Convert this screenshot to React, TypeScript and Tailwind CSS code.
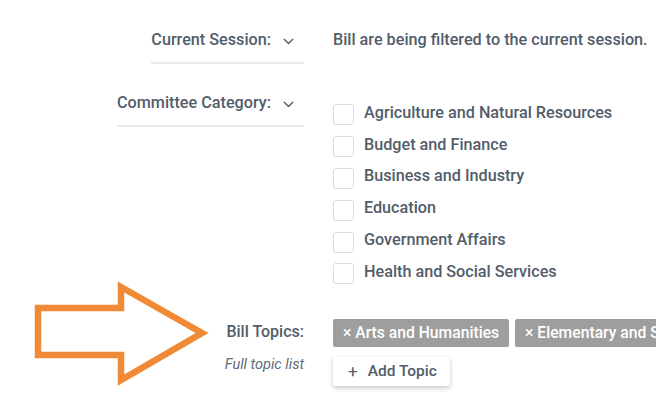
import React from "react";

const categories = [
  "Agriculture and Natural Resources",
  "Budget and Finance",
  "Business and Industry",
  "Education",
  "Government Affairs",
  "Health and Social Services",
];

function Chevron() {
  return (
    <svg width="11" height="7" viewBox="0 0 11 7" className="ml-[12px] mt-[10px]" fill="none">
      <path d="M1.2 1.2 L5.5 5.5 L9.8 1.2" stroke="#5b6470" strokeWidth="1.5" strokeLinecap="round" strokeLinejoin="round" />
    </svg>
  );
}

export default function App() {
  return (
    <div className="relative w-[656px] h-[405px] overflow-hidden bg-white font-['Roboto','Liberation_Sans',sans-serif] text-[#535d6a]">
      <svg className="absolute left-0 top-0 pointer-events-none" width="656" height="405" viewBox="0 0 656 405">
        <polygon
          points="38,308 121,308 121,287 202,333 121,380 121,355 38,355"
          fill="none"
          stroke="#f08a36"
          strokeWidth="6.5"
          strokeLinejoin="miter"
        />
      </svg>

      <div className="pt-[28px]">
        {/* Current Session */}
        <div className="flex">
          <div className="w-[304px] flex justify-end shrink-0">
            <div className="flex items-start border-b-2 border-[#ebebeb] pb-[10px] pr-[10px]">
              <span className="text-[16.2px] leading-[24px] font-medium">Current Session:</span>
              <Chevron />
            </div>
          </div>
          <div className="pl-[29px] text-[16.2px] leading-[24px] font-medium whitespace-nowrap">
            Bill are being filtered to the current session.
          </div>
        </div>

        {/* Committee Category */}
        <div className="flex mt-[27px]">
          <div className="w-[304px] flex justify-end shrink-0 self-start">
            <div className="flex items-start border-b-2 border-[#ebebeb] pb-[10px] pr-[10px]">
              <span className="text-[16.2px] leading-[24px] font-medium">Committee Category:</span>
              <Chevron />
            </div>
          </div>
          <div className="pl-[29px] pt-[6px] flex flex-col">
            {categories.map((c) => (
              <label key={c} className="flex items-center h-[31.8px] whitespace-nowrap">
                <span className="w-[21px] h-[21px] mt-[4px] rounded-[3px] border border-[#dcdcdc] bg-white shrink-0" />
                <span className="ml-[10px] text-[16.2px] leading-[24px] font-medium">{c}</span>
              </label>
            ))}
          </div>
        </div>

        {/* Bill Topics */}
        <div className="flex mt-[31px]">
          <div className="w-[304px] flex flex-col items-end shrink-0 pt-[1px]">
            <span className="text-[16px] leading-[24px] font-medium">Bill Topics:</span>
            <span className="mt-[12px] text-[14.5px] leading-[18px] italic text-[#5e6a78]">Full topic list</span>
          </div>
          <div className="pl-[29px] flex flex-col items-start">
            <div className="flex gap-[6px] whitespace-nowrap">
              <span className="h-[28px] flex items-center px-[10px] rounded-[2px] bg-[#9e9e9e] text-white text-[15.7px] font-medium">
                × Arts and Humanities
              </span>
              <span className="h-[28px] flex items-center px-[10px] rounded-[2px] bg-[#9e9e9e] text-white text-[15.7px] font-medium">
                × Elementary and Secondary Education
              </span>
            </div>
            <button className="mt-[10px] h-[29px] w-[117px] flex items-center pl-[15px] rounded-[3px] bg-white shadow-[0_2px_5px_rgba(0,0,0,0.22)] text-[15.5px] font-medium text-[#535d6a]">
              <span className="text-[17px] mr-[10px] font-normal">+</span>
              Add Topic
            </button>
          </div>
        </div>
      </div>
    </div>
  );
}
